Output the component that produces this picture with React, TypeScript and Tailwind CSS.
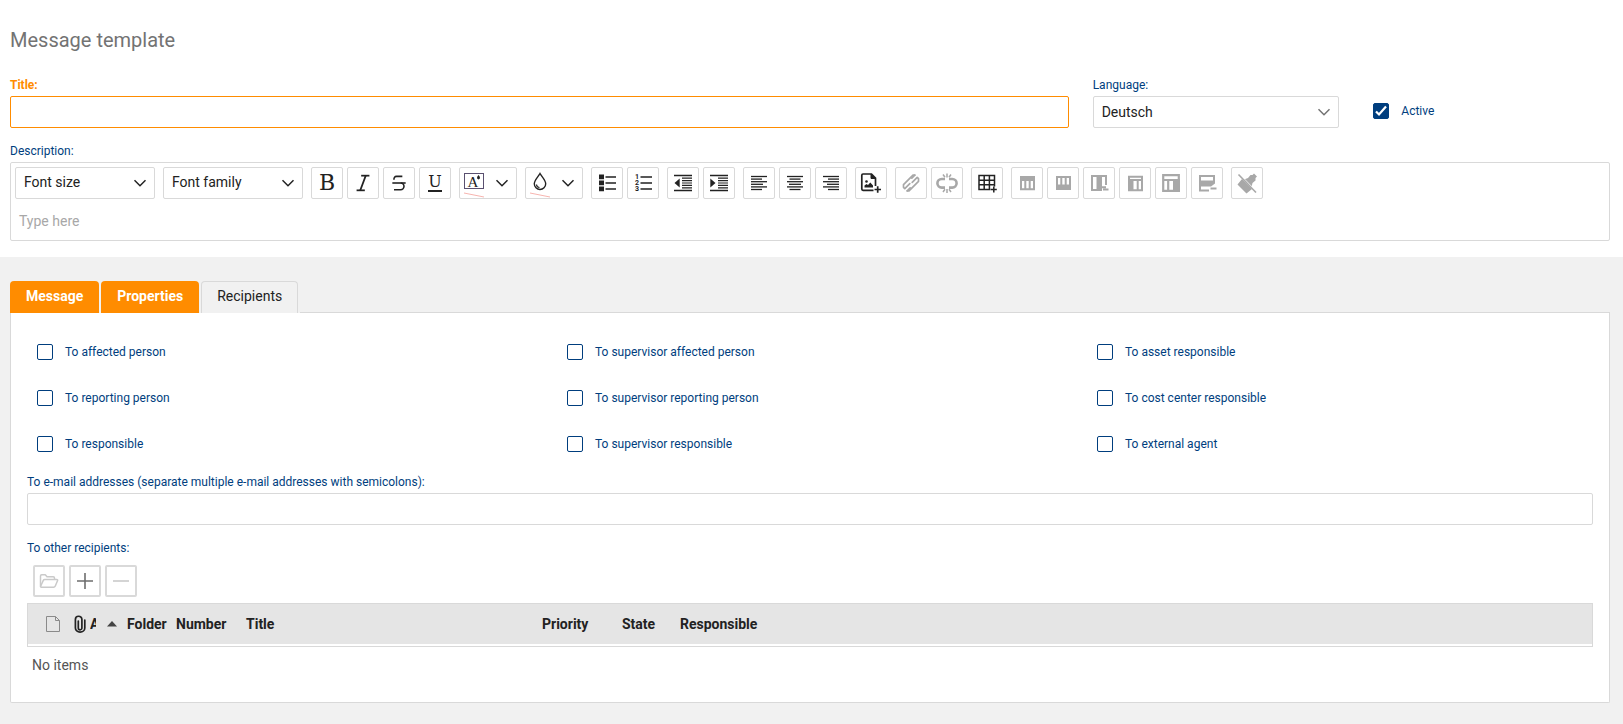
import { useState } from "react";
import type { ReactNode } from "react";
import { Italic, Strikethrough } from "lucide-react";

interface Tool {
  label: string;
  icon: ReactNode;
  disabled?: boolean;
}

const leftAlt = [24, 19, 24, 20, 24, 19];

function Glyph({ children }: { children: ReactNode }) {
  return (
    <svg viewBox="1 1 30 30" className="h-[30px] w-[30px]" fill="none" stroke="currentColor" aria-hidden="true">
      {children}
    </svg>
  );
}

function Chevron({ className = "" }: { className?: string }) {
  return (
    <svg viewBox="0 0 14 8" className={`h-2 w-3.5 ${className}`} fill="none" stroke="currentColor" strokeWidth="1.5" aria-hidden="true">
      <path d="M1.5 1.2 7 6.7l5.500-5.500" />
    </svg>
  );
}

const textTools: Tool[] = [
  { label: "Bold", icon: <span className="font-['DejaVu_Serif',serif] text-[22px] leading-none">B</span> },
  { label: "Italic", icon: <Italic className="h-[22px] w-[22px]" strokeWidth={1.9} strokeLinecap="butt" /> },
  { label: "Strikethrough", icon: <Strikethrough className="h-5 w-5" strokeWidth={1.9} strokeLinecap="butt" /> },
  {
    label: "Underline",
    icon: <span className="border-b-2 border-[#222] font-['DejaVu_Serif',serif] text-base leading-4">U</span>,
  },
];

const toolGroups: Tool[][] = [
  [
    {
      label: "Bulleted list",
      icon: (
        <Glyph>
          <path d="M8 7.500h5v4.800H8zM8 13.500h5v4.800H8zM8 19.500h5v4.800H8z" fill="currentColor" stroke="none" />
          <path d="M14.500 10H25M14.500 16H25M14.500 22H25" strokeWidth="1.500" />
        </Glyph>
      ),
    },
    {
      label: "Numbered list",
      icon: (
        <Glyph>
          <g fill="currentColor" stroke="none" fontSize="7" fontWeight="700" fontFamily="Roboto, sans-serif">
            <text x="8" y="12">1</text>
            <text x="8" y="18">2</text>
            <text x="8" y="24">3</text>
          </g>
          <path d="M13.500 10H25M13.500 16H25M13.500 22H25" strokeWidth="1.500" />
        </Glyph>
      ),
    },
  ],
  [
    {
      label: "Decrease indent",
      icon: (
        <Glyph>
          <path d="M7 8.500h18M7 23.500h18" strokeWidth="1.500" />
          <path d="M15 11.200h10M15 13.600h10M15 16h10M15 18.400h10M15 20.800h10" strokeWidth="1.200" />
          <path d="M12.700 11.500v9L7.500 16z" fill="currentColor" stroke="none" />
        </Glyph>
      ),
    },
    {
      label: "Increase indent",
      icon: (
        <Glyph>
          <path d="M7 8.500h18M7 23.500h18" strokeWidth="1.500" />
          <path d="M15 11.200h10M15 13.600h10M15 16h10M15 18.400h10M15 20.800h10" strokeWidth="1.200" />
          <path d="M7.300 11.500v9l5.200-4.500z" fill="currentColor" stroke="none" />
        </Glyph>
      ),
    },
  ],
  [
    {
      label: "Align left",
      icon: (
        <Glyph>
          {leftAlt.map((end, i) => (
            <path key={i} d={`M8 ${9.5 + i * 2.6}H${end}`} strokeWidth="1.300" />
          ))}
        </Glyph>
      ),
    },
    {
      label: "Align center",
      icon: (
        <Glyph>
          {leftAlt.map((end, i) => (
            <path key={i} d={`M${8 + (24 - end) / 2} ${9.5 + i * 2.6}H${24 - (24 - end) / 2}`} strokeWidth="1.300" />
          ))}
        </Glyph>
      ),
    },
    {
      label: "Align right",
      icon: (
        <Glyph>
          {leftAlt.map((end, i) => (
            <path key={i} d={`M${32 - end} ${9.5 + i * 2.6}H24`} strokeWidth="1.300" />
          ))}
        </Glyph>
      ),
    },
  ],
  [
    {
      label: "Insert image",
      icon: (
        <Glyph>
          <path d="M18.500 23.300H8a1.200 1.200 0 0 1-1.200-1.200V8.200A1.200 1.200 0 0 1 8 7h8.500l4 4v8" strokeWidth="1.700" />
          <path d="M16 7v4.500h4.500z" fill="currentColor" />
          <path d="M9.500 20.500v-2l2-1.500 1.500 1 2.300-2.500 2.700 3v2z" fill="currentColor" stroke="none" />
          <circle cx="11.500" cy="14.500" r="1.300" fill="currentColor" stroke="none" />
          <path d="M22.700 19.300v6.400M19.500 22.500H26" strokeWidth="1.700" />
        </Glyph>
      ),
    },
  ],
  [
    {
      label: "Insert link",
      disabled: true,
      icon: (
        <Glyph>
          <g strokeWidth="1.700" strokeLinecap="round" strokeLinejoin="round">
            <path d="M19.800 8.200H18L8.500 17.700v2.600l1.300 1.300 5-5" />
            <path d="M12.200 23.800H14l9.500-9.500v-2.600l-1.300-1.300-5 5" />
            <path d="m12.200 23.800 3-3M19.800 8.200l-3 3" />
          </g>
        </Glyph>
      ),
    },
    {
      label: "Remove link",
      disabled: true,
      icon: (
        <Glyph>
          <path d="M14 12h-3.300a4.300 4.300 0 0 0 0 8.600H14M18 12h3.300a4.300 4.300 0 0 1 0 8.600H18" strokeWidth="2.600" />
          <path d="M16 6.500v4M12 7.500l2 2.700M20 7.500l-2 2.700M16 22v4M12 25l2-2.700M20 25l-2-2.700" strokeWidth="1.500" />
        </Glyph>
      ),
    },
  ],
  [
    {
      label: "Insert table",
      icon: (
        <Glyph>
          <path d="M19.500 22.500H8v-14h15.500v11M8 13.200h15.500M8 17.800h15.500M13.200 8.500v14M18.400 8.500v14" strokeWidth="1.500" />
          <path d="M22.800 19.500v6M19.800 22.500h6" strokeWidth="1.500" />
        </Glyph>
      ),
    },
  ],
  [
    {
      label: "Table header",
      disabled: true,
      icon: (
        <Glyph>
          <path d="M9 9h15v5H9z" fill="currentColor" stroke="none" />
          <path d="M10 14v8.300h13V14M14.300 14v9M18.700 14v9" strokeWidth="2" />
        </Glyph>
      ),
    },
    {
      label: "Table footer",
      disabled: true,
      icon: (
        <Glyph>
          <path d="M9 17.500h15v5.500H9z" fill="currentColor" stroke="none" />
          <path d="M10 18v-8h13v8M14.300 9v9M18.700 9v9" strokeWidth="2" />
        </Glyph>
      ),
    },
    {
      label: "Delete column",
      disabled: true,
      icon: (
        <Glyph>
          <path d="M13.500 8H19v16h-5.500z" fill="currentColor" stroke="none" />
          <path d="M14 9H9v14h5M18 9h5v9M19 20.200h4M20 22.500h5.500" strokeWidth="2" />
        </Glyph>
      ),
    },
    {
      label: "Table first column",
      disabled: true,
      icon: (
        <Glyph>
          <path d="M9 12.500h5.500V24H9z" fill="currentColor" stroke="none" />
          <path d="M10 9.700h13v13.500H10zM9 13h14M18.700 13v10" strokeWidth="2" />
        </Glyph>
      ),
    },
    {
      label: "Table last column",
      disabled: true,
      icon: (
        <Glyph>
          <path d="M18 12h7v13h-7z" fill="currentColor" stroke="none" />
          <path d="M8.200 8.200h15.600v15.600H8.200zM8 13h16M13.200 13v11" strokeWidth="2.200" />
        </Glyph>
      ),
    },
    {
      label: "Delete row",
      disabled: true,
      icon: (
        <Glyph>
          <path d="M8 13.500h16v3l-4 3H8z" fill="currentColor" stroke="none" />
          <path d="M9 14V9h14v5M9 19v4.500h9" strokeWidth="2" />
          <path d="M19.500 21.500h6" strokeWidth="2" />
        </Glyph>
      ),
    },
  ],
  [
    {
      label: "Clear formatting",
      disabled: true,
      icon: (
        <Glyph>
          <path d="M6.500 17.500 11 12l10 10-5.500 4.500zM13 12.500l4-1.500 2.500-3h2L23 6.500 26 9.500 24.500 11v2.500l-3 2.500-1 4z" fill="currentColor" stroke="none" />
          <path d="m8.500 7 17.500 18" stroke="#fff" strokeWidth="1" />
          <path d="m7.500 7.500 17.500 18" strokeWidth="1.600" />
        </Glyph>
      ),
    },
  ],
];

const recipients = [
  "To affected person",
  "To supervisor affected person",
  "To asset responsible",
  "To reporting person",
  "To supervisor reporting person",
  "To cost center responsible",
  "To responsible",
  "To supervisor responsible",
  "To external agent",
];

function ToolButton({ tool }: { tool: Tool }) {
  return (
    <button
      type="button"
      aria-label={tool.label}
      disabled={tool.disabled}
      className="flex h-8 w-8 items-center justify-center rounded-xs border border-[#d9d9d9] bg-white text-[#222] disabled:text-[#a8a8a8]"
    >
      {tool.icon}
    </button>
  );
}

function ToolSelect({ label }: { label: string }) {
  return (
    <div className="relative mr-2">
      <select
        aria-label={label}
        className="block h-8 w-[140px] appearance-none rounded-xs border border-[#d9d9d9] bg-white px-2 pb-0.5 text-sm text-[#222]"
      >
        <option>{label}</option>
      </select>
      <Chevron className="pointer-events-none absolute top-3 right-2" />
    </div>
  );
}

function Checkbox({ label, defaultChecked = false }: { label: string; defaultChecked?: boolean }) {
  return (
    <label className="flex items-center gap-3 text-xs text-[#003e7e]">
      <span className="relative h-4 w-4">
        <input
          type="checkbox"
          defaultChecked={defaultChecked}
          className="peer block h-4 w-4 appearance-none rounded-xs border border-[#003e7e] bg-white checked:bg-[#003e7e]"
        />
        <svg
          viewBox="0 0 16 16"
          className="pointer-events-none absolute inset-0 hidden h-4 w-4 peer-checked:block"
          fill="none"
          stroke="#fff"
          strokeWidth="2.200"
          aria-hidden="true"
        >
          <path d="m3 8.500 3 3 7-8" />
        </svg>
      </span>
      {label}
    </label>
  );
}

export default function App() {
  const [tab, setTab] = useState("Recipients");

  return (
    <div className="min-h-screen bg-[#f1f1f1] font-[Roboto,sans-serif] text-sm text-[#222]">
      <section className="bg-white pt-7 pr-[13px] pb-4 pl-2.5">
        <h1 className="text-xl leading-6 text-[#737373]">Message template</h1>

        <div className="mt-[25px] grid grid-cols-6 gap-x-6">
          <div className="col-span-4">
            <label htmlFor="title" className="block pb-[3px] text-xs font-bold text-[#ff8c00]">
              Title:
            </label>
            <input id="title" className="block h-8 w-full rounded-xs border border-[#ff8c00] px-2 outline-none" />
          </div>
          <div>
            <label htmlFor="language" className="block pb-[3px] text-xs text-[#003e7e]">
              Language:
            </label>
            <div className="relative">
              <select id="language" className="block h-8 w-full appearance-none rounded-xs border border-[#d9d9d9] bg-white px-2">
                <option>Deutsch</option>
              </select>
              <Chevron className="pointer-events-none absolute top-3 right-2 text-[#737373]" />
            </div>
          </div>
          <div className="flex items-end pb-[9px] pl-2.5">
            <Checkbox label="Active" defaultChecked />
          </div>
        </div>

        <label htmlFor="description" className="mt-[15px] block pb-[3px] text-xs text-[#003e7e]">
          Description:
        </label>
        <div className="rounded-xs border border-[#d9d9d9]">
          <div className="flex flex-wrap gap-y-1 p-1">
            <ToolSelect label="Font size" />
            <ToolSelect label="Font family" />
            <div className="mr-2 flex gap-1">
              {textTools.map((tool) => (
                <ToolButton key={tool.label} tool={tool} />
              ))}
            </div>
            <button
              type="button"
              aria-label="Text color"
              className="mr-2 flex h-8 w-[58px] items-center rounded-xs border border-[#d9d9d9]"
            >
              <Glyph>
                <rect x="5.500" y="6.500" width="19" height="15" stroke="#5a5070" />
                <text x="8.500" y="19.500" fontSize="15" fill="#222" stroke="none" fontFamily="Liberation Serif, serif">
                  A
                </text>
                <path d="M19.500 8q3 3.500 0 4.500-3-1 0-4.500z" fill="#222" stroke="none" />
                <path d="m5 26 20 4" stroke="#f7b5b0" />
              </Glyph>
              <Chevron className="ml-[5px]" />
            </button>
            <button
              type="button"
              aria-label="Background color"
              className="mr-2 flex h-8 w-[58px] items-center rounded-xs border border-[#d9d9d9]"
            >
              <Glyph>
                <path d="M15 6.500c2 3.500 5.700 6.500 5.700 10.300a5.700 5.700 0 0 1-11.400 0C9.300 13 13 10 15 6.500z" strokeWidth="1.400" />
                <path d="M11.500 17.500a3.200 3.200 0 0 0 3 3" strokeWidth="1.200" />
                <path d="m5 26 20 4" stroke="#f7b5b0" />
              </Glyph>
              <Chevron className="ml-[5px]" />
            </button>
            {toolGroups.map((group) => (
              <div key={group[0].label} className="mr-2 flex gap-1">
                {group.map((tool) => (
                  <ToolButton key={tool.label} tool={tool} />
                ))}
              </div>
            ))}
          </div>
          <textarea
            id="description"
            rows={1}
            placeholder="Type here"
            className="block h-[37px] w-full resize-none px-2 pt-2 outline-none placeholder:text-[#a8a8a8]"
          />
        </div>
      </section>

      <section className="pt-6 pr-[13px] pb-5 pl-2.5">
        <div role="tablist" className="flex h-8">
          <div className="flex gap-0.5 pr-0.5">
            {["Message", "Properties", "Recipients"].map((name) => (
              <button
                key={name}
                type="button"
                role="tab"
                aria-selected={tab === name}
                onClick={() => setTab(name)}
                className={
                  name === "Recipients"
                    ? "rounded-t-sm border border-b-0 border-[#d9d9d9] px-[15px] pb-[3px]"
                    : "rounded-t-sm bg-[#ff8c00] px-4 pb-0.5 font-bold text-white"
                }
              >
                {name}
              </button>
            ))}
          </div>
          <div className="flex-1 border-b border-[#d9d9d9]" />
        </div>

        <div className="rounded-b-xs border border-t-0 border-[#d9d9d9] bg-white px-4 pt-[31px] pb-[27px]">
          <div className="-mr-2.5 grid grid-cols-3 gap-x-6 gap-y-[30px] pl-2.5">
            {recipients.map((label) => (
              <Checkbox key={label} label={label} />
            ))}
          </div>

          <label htmlFor="emails" className="mt-[22px] block pb-[3px] text-xs text-[#003e7e]">
            To e-mail addresses (separate multiple e-mail addresses with semicolons):
          </label>
          <input id="emails" className="block h-8 w-full rounded-xs border border-[#d9d9d9] px-2 outline-none" />

          <h2 className="mt-[15px] text-xs text-[#003e7e]">To other recipients:</h2>
          <div className="mt-[9px] flex gap-1 pl-1.5 text-[#6e6e6e]">
            <button type="button" aria-label="Open" disabled className="flex h-8 w-8 items-center justify-center rounded-xs border-2 border-[#d9d9d9] text-[#cacaca]">
              <svg viewBox="0 0 20 16" className="h-4 w-5" fill="none" stroke="currentColor" strokeWidth="1.500" strokeLinejoin="round" aria-hidden="true">
                <path d="M1.500 13.500V3q0-1.200 1.200-1.200h3.600L8 3.700h6.300q1.200 0 1.200 1.200v1.600" />
                <path d="M1.500 13.500 4.300 7.400q.4-.9 1.400-.9h12q1.400 0 .8 1.300L16.300 13q-.5 1.200-1.800 1.200H2.300q-.8 0-.8-.7z" />
              </svg>
            </button>
            <button type="button" aria-label="Add" className="flex h-8 w-8 items-center justify-center rounded-xs border-2 border-[#d9d9d9]">
              <svg viewBox="0 0 16 16" className="h-4 w-4" stroke="currentColor" strokeWidth="1.600" aria-hidden="true">
                <path d="M8 0v16M0 8h16" />
              </svg>
            </button>
            <button type="button" aria-label="Remove" disabled className="flex h-8 w-8 items-center justify-center rounded-xs border-2 border-[#d9d9d9] text-[#cacaca]">
              <svg viewBox="0 0 16 16" className="h-4 w-4" stroke="currentColor" strokeWidth="1.600" aria-hidden="true">
                <path d="M0 8h16" />
              </svg>
            </button>
          </div>

          <div className="mt-1.5 border border-[#d9d9d9] pb-0.5">
            <table className="w-full table-fixed text-left">
              <thead className="bg-[#e5e5e5]">
                <tr className="h-10">
                  <th className="w-[46px] pl-[17px]">
                    <svg viewBox="0 0 16 18" className="h-[18px] w-4" fill="none" stroke="#8a8a8a" aria-label="Type">
                      <path d="M1.500 1.500h9l4 4v11h-13zM10.500 1.500v4h4" />
                    </svg>
                  </th>
                  <th className="w-4">
                    <svg viewBox="0 0 12 18" className="h-[18px] w-3" fill="none" stroke="#222" strokeWidth="1.700" strokeLinecap="round" aria-label="Attachments">
                      <path d="M4.300 6v7a1.800 1.800 0 0 0 3.600 0V4.500a3 3 0 0 0-6.500 0V13a4.600 4.000 0 0 0 9.400 0V5" />
                    </svg>
                  </th>
                  <th className="w-[37px] font-bold">
                    <span className="flex items-center">
                      <span className="w-1.5 overflow-hidden">A</span>
                      <svg viewBox="0 0 10 6" className="ml-[11px] h-1.5 w-2.5" fill="#444" aria-hidden="true">
                        <path d="m5 0 5 5.500H0z" />
                      </svg>
                    </span>
                  </th>
                  <th className="w-[49px] font-bold">Folder</th>
                  <th className="w-[70px] font-bold">Number</th>
                  <th className="w-[296px] font-bold">Title</th>
                  <th className="w-20 font-bold">Priority</th>
                  <th className="w-[58px] font-bold">State</th>
                  <th className="font-bold">Responsible</th>
                </tr>
              </thead>
            </table>
          </div>
          <p className="mt-2 pl-[5px] text-[#555]">No items</p>
        </div>
      </section>
    </div>
  );
}
